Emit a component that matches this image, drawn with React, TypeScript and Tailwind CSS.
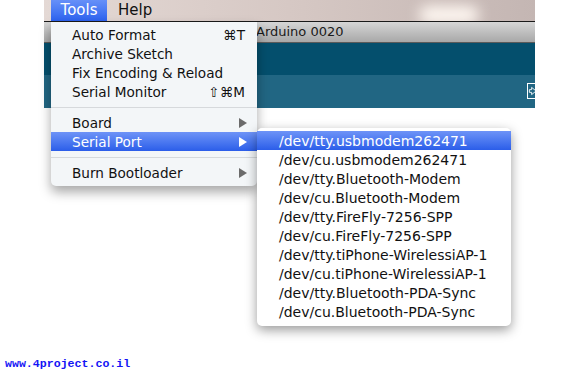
import { ReactNode } from 'react';

const mainFont = { fontFamily: '"DejaVu Sans", "Lucida Grande", sans-serif' };

const ports = [
  '/dev/tty.usbmodem262471',
  '/dev/cu.usbmodem262471',
  '/dev/tty.Bluetooth-Modem',
  '/dev/cu.Bluetooth-Modem',
  '/dev/tty.FireFly-7256-SPP',
  '/dev/cu.FireFly-7256-SPP',
  '/dev/tty.tiPhone-WirelessiAP-1',
  '/dev/cu.tiPhone-WirelessiAP-1',
  '/dev/tty.Bluetooth-PDA-Sync',
  '/dev/cu.Bluetooth-PDA-Sync',
];

function Arrow({ white }: { white?: boolean }) {
  return (
    <svg width="8" height="10" viewBox="0 0 8 10" className="absolute left-[188px] top-[5px]">
      <path d="M0 0 L8 5 L0 10 Z" fill={white ? '#ffffff' : '#6b6b6b'} />
    </svg>
  );
}

function MenuItem({ label, shortcut, arrow, active }: { label: string; shortcut?: ReactNode; arrow?: boolean; active?: boolean }) {
  return (
    <div
      className={
        'relative flex h-[19px] items-center pl-[21px] pr-[12px] pt-[2px] ' +
        (active ? 'bg-gradient-to-b from-[#6e93f7] to-[#2b5de9] text-white' : 'text-[#111]')
      }
    >
      <span className="flex-1 leading-none">{label}</span>
      {shortcut && <span className="leading-none">{shortcut}</span>}
      {arrow && <Arrow white={active} />}
    </div>
  );
}

function Separator() {
  return (
    <div className="flex h-[12px] items-center">
      <div className="h-px w-full bg-[#d6d9dc]" />
    </div>
  );
}

export default function App() {
  return (
    <div className="relative h-[375px] w-[580px] overflow-hidden bg-white" style={mainFont}>
      {/* window crop */}
      <div className="ml-[44px] flex w-[491px] flex-col">
        <div className="h-[21px] bg-gradient-to-r from-[#e4d9d5] via-[#d6c8c4] to-[#c4b6b3] border-b border-[#1a1a1a] box-content relative overflow-hidden">
          <div className="absolute left-[375px] top-[6px] h-[18px] w-[60px] rounded-full bg-[#fff8f2] blur-[7px]" />
        </div>
        <div className="flex h-[21px] items-center border-b border-[#5a5a5a] bg-gradient-to-b from-[#d6d6d6] to-[#a8a8a8] pl-[212px] text-[13px] text-[#1a1a1a]">
          Arduino 0020
        </div>
        <div className="h-[32px] bg-[#044f6d]" />
        <div className="relative h-[33px] bg-[#216683]">
          <div className="absolute left-[483px] top-[8px] flex h-[16px] w-[10px] items-center border border-white border-r-0">
            <svg width="10" height="10" viewBox="0 0 10 10">
              <path d="M1.5 3.5 H4 V1 L9 5 L4 9 V6.5 H1.5 Z" fill="none" stroke="#fff" strokeWidth="1" />
            </svg>
          </div>
        </div>
      </div>

      {/* menu bar titles */}
      <div className="absolute left-[51px] top-0 flex h-[21px] items-center text-[15px] leading-none text-[#111]">
        <div className="flex h-full w-[56px] items-center justify-center bg-gradient-to-b from-[#6690f8] to-[#2d62ef] text-white">Tools</div>
        <div className="ml-[11px]">Help</div>
      </div>

      {/* Tools menu */}
      <div className="absolute left-[51px] top-[22px] w-[206px] rounded-b-[5px] bg-[#f3f6f8] pb-[4px] pt-[3px] text-[13.6px] shadow-[0_6px_12px_rgba(0,0,0,0.35)]">
        <MenuItem label="Auto Format" shortcut="⌘T" />
        <MenuItem label="Archive Sketch" />
        <MenuItem label="Fix Encoding & Reload" />
        <MenuItem label="Serial Monitor" shortcut="⇧⌘M" />
        <Separator />
        <MenuItem label="Board" arrow />
        <MenuItem label="Serial Port" arrow active />
        <Separator />
        <MenuItem label="Burn Bootloader" arrow />
      </div>

      {/* Serial Port submenu */}
      <div className="absolute left-[257px] top-[128px] w-[254px] rounded-[5px] bg-white pb-[5px] pt-[3px] text-[14px] shadow-[0_4px_12px_rgba(0,0,0,0.4)]">
        {ports.map((p, i) => (
          <div
            key={p}
            className={
              'flex h-[19px] items-center pl-[22px] leading-none ' +
              (i === 0 ? 'bg-gradient-to-b from-[#6e93f7] to-[#2b5de9] text-white' : 'text-[#111]')
            }
          >
            {p}
          </div>
        ))}
      </div>

      {/* footer link */}
      <div
        className="absolute left-[5px] top-[358px] text-[11.6px] font-bold leading-none text-[#1414f5]"
        style={{ fontFamily: '"Liberation Mono", monospace' }}
      >
        www.4project.co.il
      </div>
    </div>
  );
}
